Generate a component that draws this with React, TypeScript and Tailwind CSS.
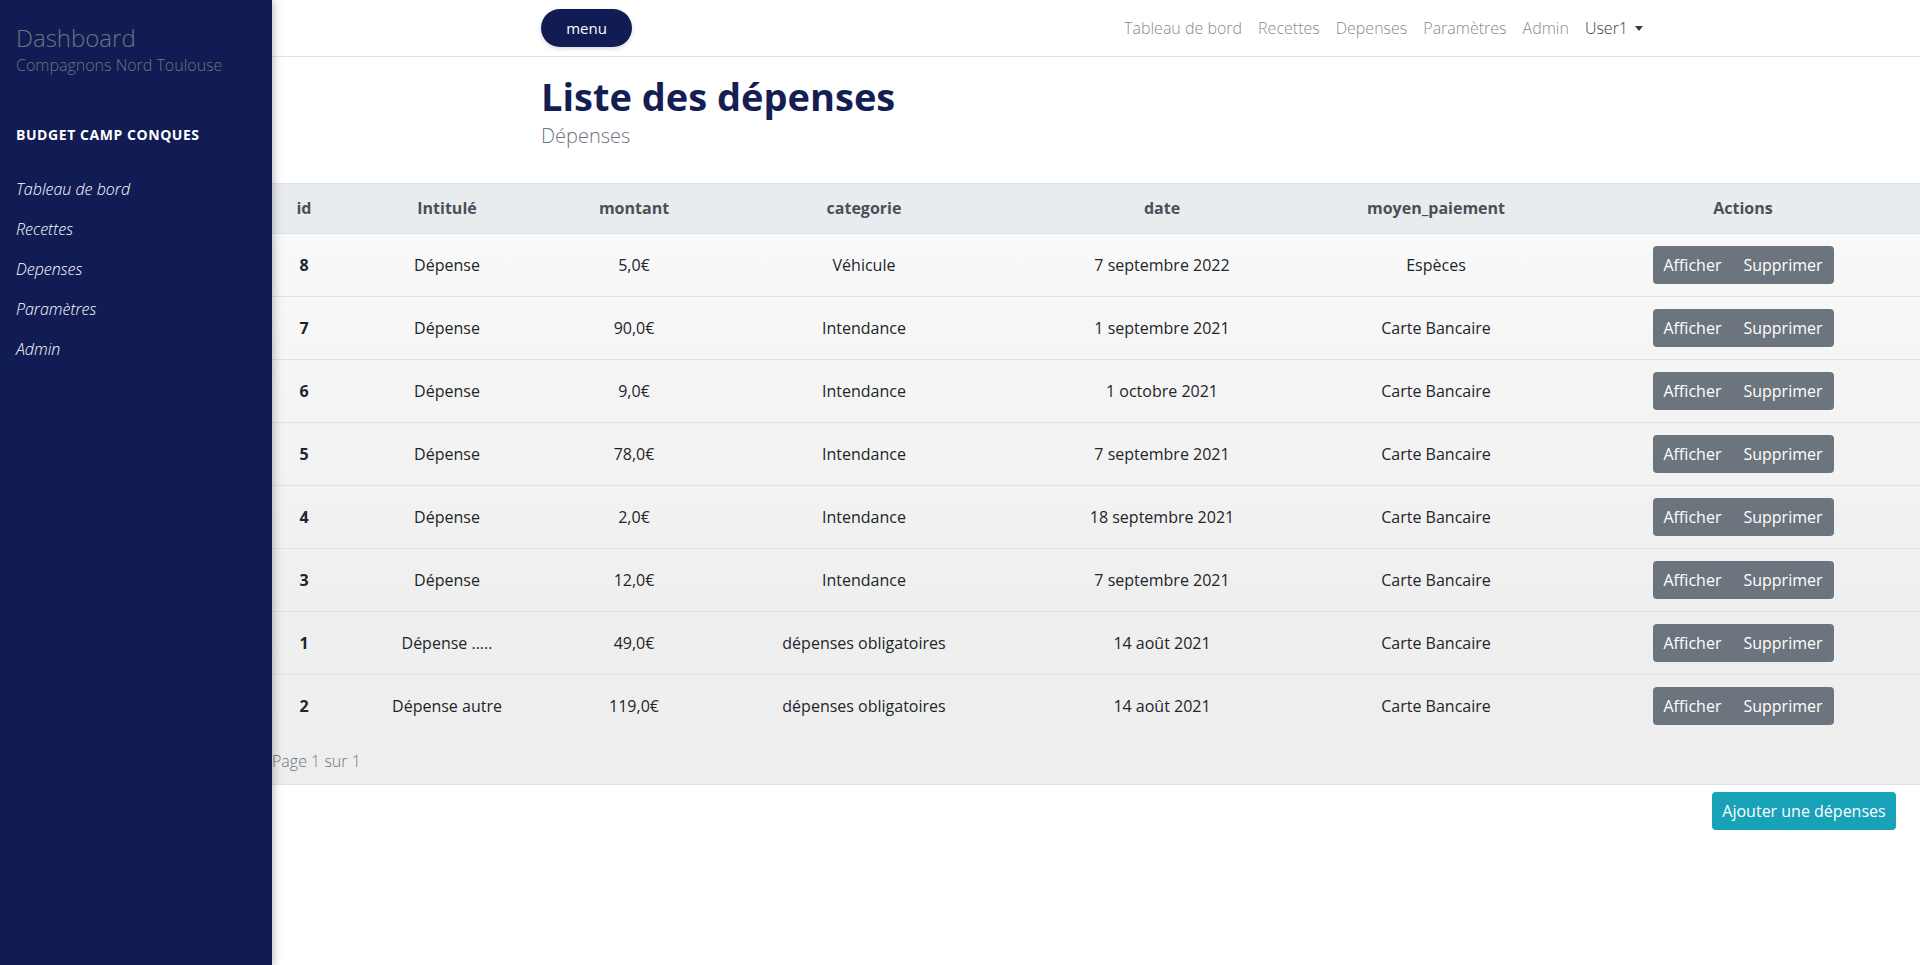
import React from "react";

const rows = [
  { id: 8, intitule: "Dépense", montant: "5,0€", categorie: "Véhicule", date: "7 septembre 2022", moyen: "Espèces" },
  { id: 7, intitule: "Dépense", montant: "90,0€", categorie: "Intendance", date: "1 septembre 2021", moyen: "Carte Bancaire" },
  { id: 6, intitule: "Dépense", montant: "9,0€", categorie: "Intendance", date: "1 octobre 2021", moyen: "Carte Bancaire" },
  { id: 5, intitule: "Dépense", montant: "78,0€", categorie: "Intendance", date: "7 septembre 2021", moyen: "Carte Bancaire" },
  { id: 4, intitule: "Dépense", montant: "2,0€", categorie: "Intendance", date: "18 septembre 2021", moyen: "Carte Bancaire" },
  { id: 3, intitule: "Dépense", montant: "12,0€", categorie: "Intendance", date: "7 septembre 2021", moyen: "Carte Bancaire" },
  { id: 1, intitule: "Dépense .....", montant: "49,0€", categorie: "dépenses obligatoires", date: "14 août 2021", moyen: "Carte Bancaire" },
  { id: 2, intitule: "Dépense autre", montant: "119,0€", categorie: "dépenses obligatoires", date: "14 août 2021", moyen: "Carte Bancaire" },
];

const sideLinks = ["Tableau de bord", "Recettes", "Depenses", "Paramètres", "Admin"];
const topLinks = ["Tableau de bord", "Recettes", "Depenses", "Paramètres", "Admin"];

export default function App() {
  return (
    <div
      className="flex min-h-[965px] w-full bg-white"
      style={{ fontFamily: "'Open Sans', Lato, sans-serif" }}
    >
      {/* Sidebar */}
      <aside className="relative z-10 w-[272px] shrink-0 bg-[#121c54] shadow-[2px_0_8px_rgba(0,0,0,0.25)]">
        <div className="px-4 pt-[23px]">
          <div className="text-[24px] font-light leading-[30px] text-[#6c757d]">Dashboard</div>
          <div className="mt-[1px] text-[16px] font-light leading-[22px] text-[#6c757d]">Compagnons Nord Toulouse</div>
          <div className="mt-[49px] text-[14px] font-bold uppercase leading-[20px] tracking-[0.04em] text-white">
            Budget camp Conques
          </div>
          <nav className="mt-[24px] flex flex-col">
            {sideLinks.map((l) => (
              <div key={l} className="flex h-[40px] items-center text-[16px] italic font-light text-white">
                {l}
              </div>
            ))}
          </nav>
        </div>
      </aside>

      {/* Main */}
      <main className="flex min-w-0 flex-1 flex-col">
        {/* Top nav */}
        <header className="h-[57px] border-b border-[#dee2e6] bg-white">
          <div className="mx-auto flex h-full w-[1110px] items-center justify-between">
            <button className="h-[38px] w-[91px] rounded-full bg-[#121c54] text-[15px] text-white shadow-[0_2px_4px_rgba(0,0,0,0.15)]">
              menu
            </button>
            <nav className="flex items-center text-[16px] font-light">
              {topLinks.map((l) => (
                <span key={l} className="px-[8px] text-[#8a8a8a]">
                  {l}
                </span>
              ))}
              <span className="flex items-center px-[8px] text-[#3a3a3a]">
                User1
                <span className="ml-[7px] inline-block h-0 w-0 border-x-[4px] border-t-[5px] border-x-transparent border-t-[#3a3a3a]" />
              </span>
            </nav>
          </div>
        </header>

        {/* Page title */}
        <section className="mx-auto w-[1110px] pt-[15px] pb-[33px]">
          <h1 className="text-[38px] font-bold leading-[48px] text-[#141e55]">Liste des dépenses</h1>
          <p className="mt-[2px] text-[20px] font-light leading-[28px] text-[#6c757d]">Dépenses</p>
        </section>

        {/* Table */}
        <div className="border-t border-[#dee2e6] bg-[linear-gradient(180deg,#fafafa_0%,#efefef_70%,#eeeeee_100%)]">
          <table className="w-full table-fixed border-collapse text-center text-[16px] text-[#212529]">
            <thead>
              <tr className="h-[49px] bg-[#e9ecef] text-[#495057]">
                <th className="w-[64px] font-bold">id</th>
                <th className="w-[222px] font-bold">Intitulé</th>
                <th className="w-[152px] font-bold">montant</th>
                <th className="w-[308px] font-bold">categorie</th>
                <th className="w-[288px] font-bold">date</th>
                <th className="w-[260px] font-bold">moyen_paiement</th>
                <th className="font-bold">Actions</th>
              </tr>
            </thead>
            <tbody>
              {rows.map((r) => (
                <tr key={r.id} className="h-[63px] border-t border-[#dee2e6]">
                  <td className="font-bold">{r.id}</td>
                  <td>{r.intitule}</td>
                  <td>{r.montant}</td>
                  <td>{r.categorie}</td>
                  <td>{r.date}</td>
                  <td>{r.moyen}</td>
                  <td>
                    <div className="inline-flex h-[38px] overflow-hidden rounded-[4px] bg-[#6c757d] text-white">
                      <span className="flex items-center px-[11px]">Afficher</span>
                      <span className="flex items-center px-[11px]">Supprimer</span>
                    </div>
                  </td>
                </tr>
              ))}
            </tbody>
          </table>
          <div className="flex h-[48px] items-center border-b border-[#dee2e6] text-[16px] font-light text-[#6c757d]">
            Page 1 sur 1
          </div>
        </div>

        <div className="flex justify-end pr-[24px] pt-[7px]">
          <button className="h-[38px] w-[184px] rounded-[4px] bg-[#17a2b8] text-[16px] text-white">
            Ajouter une dépenses
          </button>
        </div>
      </main>
    </div>
  );
}
